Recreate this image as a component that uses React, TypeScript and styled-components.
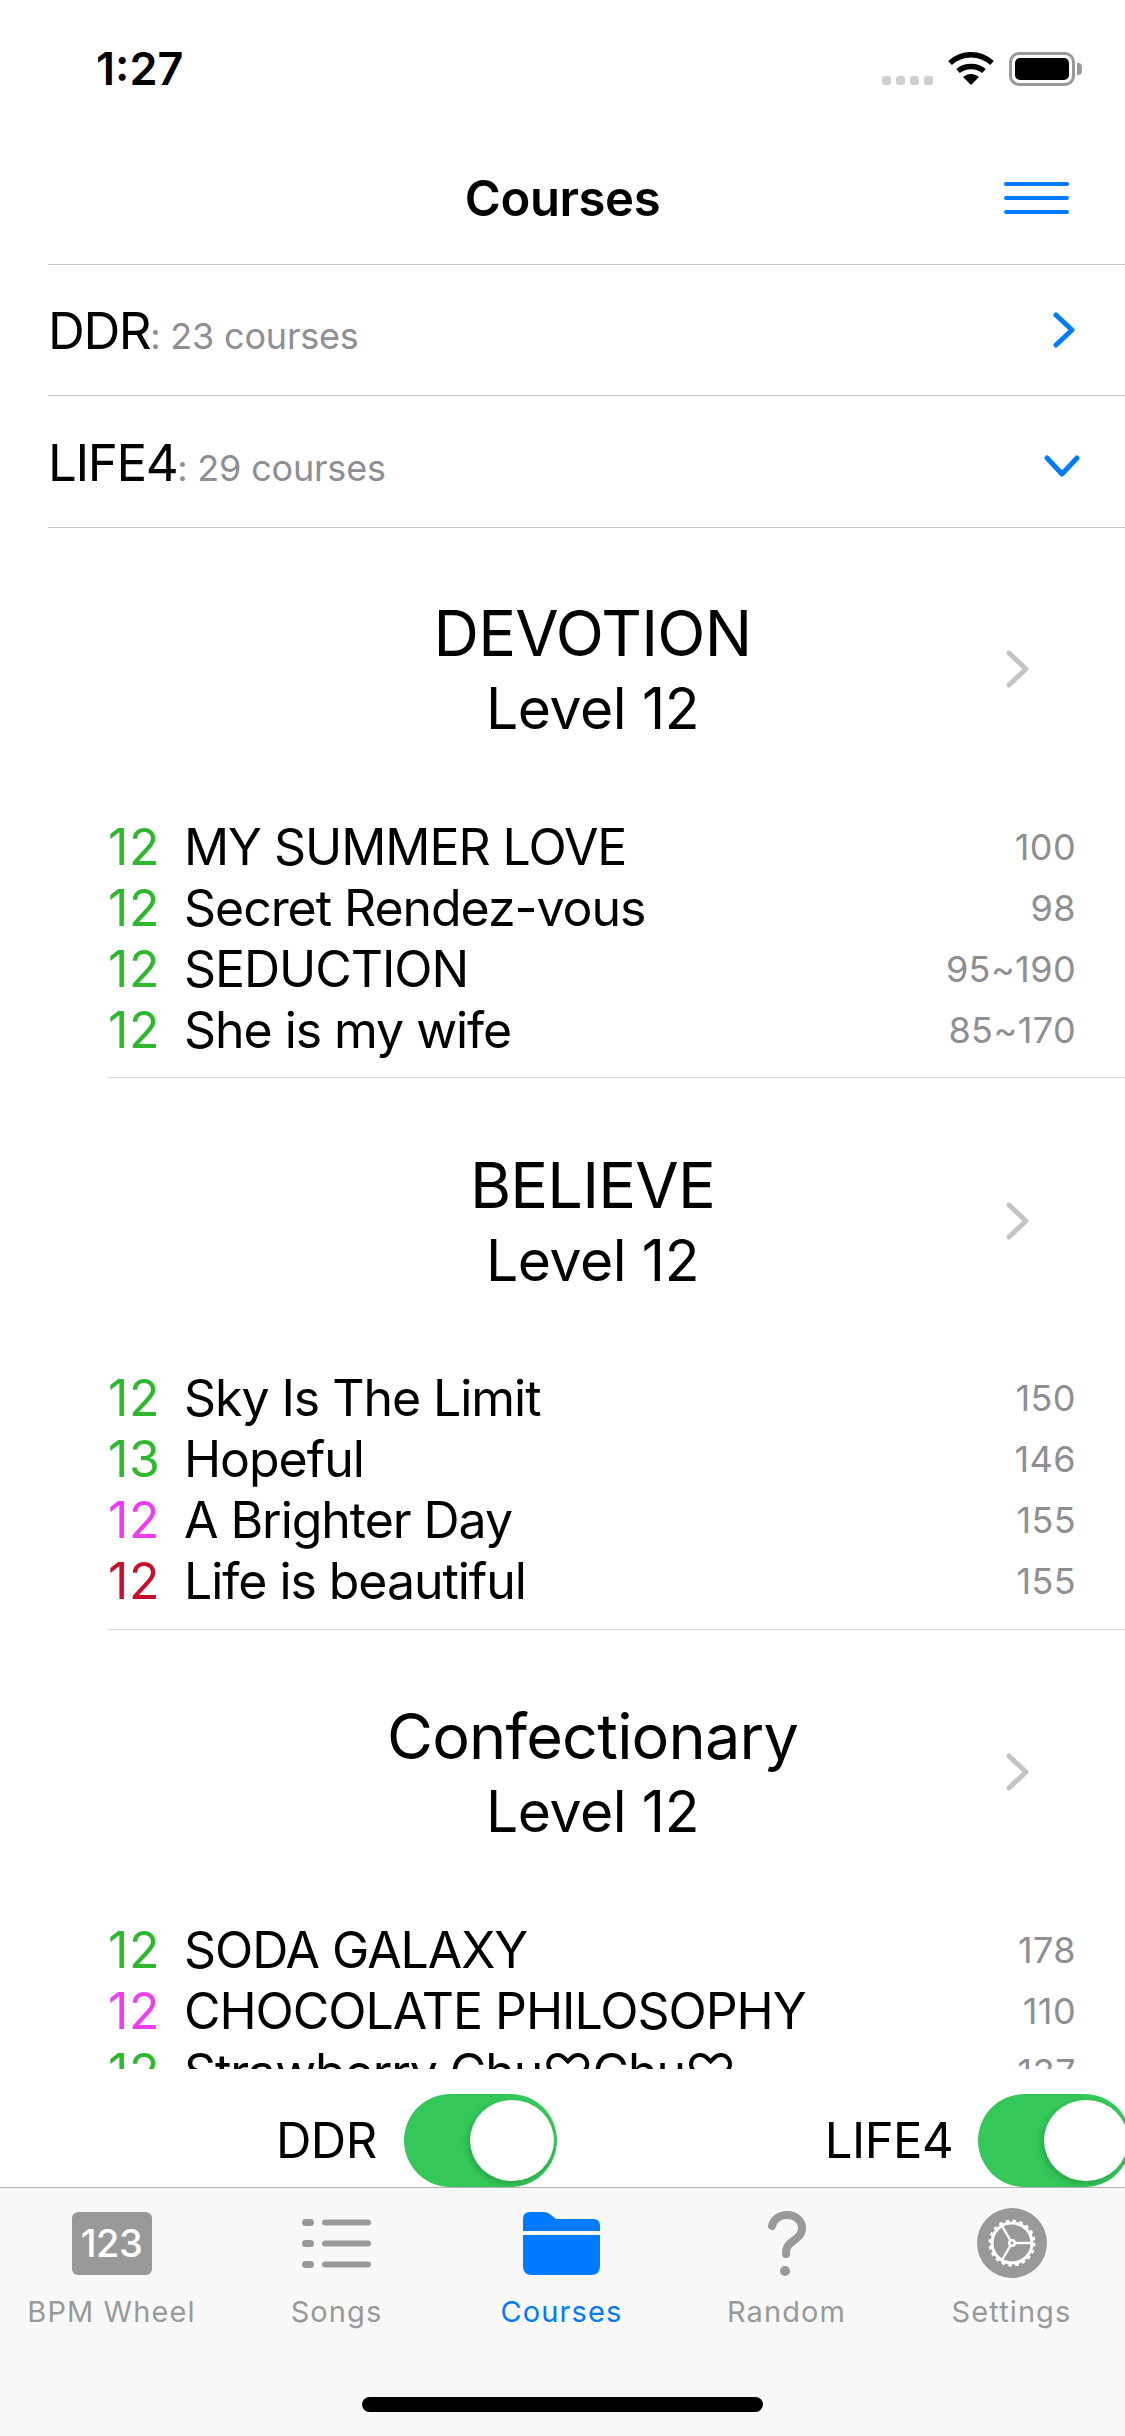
import styled, { createGlobalStyle } from "styled-components";

const GlobalStyle = createGlobalStyle`
  html, body {
    margin: 0;
    padding: 0;
    background: #fff;
  }
  * {
    box-sizing: border-box;
  }
`;

const Screen = styled.div`
  width: 1125px;
  height: 2436px;
  display: flex;
  flex-direction: column;
  overflow: hidden;
  background: #fff;
  font-family: Inter, "Liberation Sans", "DejaVu Sans", sans-serif;
  color: #000;
`;

const StatusBar = styled.div`
  height: 132px;
  flex: none;
  display: flex;
  justify-content: space-between;
  padding: 47px 50px 0 96px;
`;

const Clock = styled.div`
  font-size: 45px;
  line-height: 43px;
  font-weight: 600;
  letter-spacing: 0;
`;

const StatusIcons = styled.div`
  display: flex;
  align-items: flex-start;
  padding-top: 5px;
`;

const SignalDots = styled.div`
  display: flex;
  gap: 5px;
  margin: 24px 15px 0 0;
`;

const SignalDot = styled.span`
  width: 9px;
  height: 9px;
  border-radius: 3px;
  background: #cfcfcf;
`;

const Battery = styled.div`
  width: 66px;
  height: 34px;
  margin-left: 15px;
  border: 3px solid #999;
  border-radius: 10px;
  padding: 3px;
  position: relative;
  &::after {
    content: "";
    position: absolute;
    right: -10px;
    top: 8px;
    width: 5px;
    height: 12px;
    border-radius: 0 4px 4px 0;
    background: #999;
  }
`;

const BatteryFill = styled.div`
  height: 100%;
  border-radius: 5px;
  background: #000;
`;

const NavBar = styled.div`
  height: 132px;
  flex: none;
  display: grid;
  grid-template-columns: 1fr auto 1fr;
  align-items: center;
  padding: 0 56px;
`;

const NavTitle = styled.div`
  grid-column: 2;
  font-size: 49px;
  font-weight: 600;
  letter-spacing: -0.4px;
`;

const MenuButton = styled.div`
  justify-self: end;
  width: 65px;
  display: flex;
  flex-direction: column;
  gap: 10px;
`;

const MenuBar = styled.span`
  height: 4px;
  border-radius: 2px;
  background: #007aff;
`;

const GroupRow = styled.div<{ $height: number; $paddingTop?: number }>`
  height: ${({ $height }) => $height}px;
  padding-top: ${({ $paddingTop = 0 }) => $paddingTop}px;
  flex: none;
  margin-left: 48px;
  border-top: 1.5px solid #c8c8c8;
  display: flex;
  align-items: center;
  justify-content: space-between;
`;

const GroupText = styled.div`
  font-size: 51px;
  letter-spacing: -1.4px;
`;

const GroupCount = styled.span`
  font-size: 36px;
  letter-spacing: -0.2px;
  color: #8e8e93;
`;

const BlueChevron = styled.svg<{ $right: number; $top?: number }>`
  margin-right: ${({ $right }) => $right}px;
  margin-top: ${({ $top = 0 }) => $top}px;
  fill: none;
  stroke: #007aff;
  stroke-width: 5;
  stroke-linecap: round;
  stroke-linejoin: round;
`;

const Courses = styled.div`
  flex: 1;
  min-height: 0;
  overflow: hidden;
  border-top: 1.5px solid #c8c8c8;
  margin-left: 48px;
`;

const Course = styled.section`
  margin-left: 60px;
  padding-bottom: 17px;
  border-bottom: 1px solid #d6d6d6;
  & + & {
    margin-top: 1.5px;
  }
`;

const CourseHead = styled.div`
  height: 288px;
  padding: 67px 48px 0 0;
  display: grid;
  grid-template-columns: 1fr auto 1fr;
  align-items: start;
`;

const CourseTitle = styled.div`
  grid-column: 2;
  text-align: center;
`;

const CourseName = styled.div`
  font-size: 63px;
  line-height: 76px;
  letter-spacing: -0.8px;
`;

const CourseLevel = styled.div`
  font-size: 57px;
  line-height: 76px;
  letter-spacing: -0.4px;
`;

const CourseChevron = styled.svg`
  grid-column: 3;
  justify-self: end;
  margin: 54px 46px 0 0;
  width: 26px;
  height: 40px;
  fill: none;
  stroke: #c4c4c7;
  stroke-width: 5;
  stroke-linecap: round;
  stroke-linejoin: round;
`;

const Song = styled.div`
  height: 61px;
  display: flex;
  align-items: center;
  padding-right: 49px;
  font-size: 50px;
  letter-spacing: -1.05px;
`;

const SongLevel = styled.span<{ $color: string }>`
  width: 76px;
  flex: none;
  letter-spacing: 0.7px;
  color: ${({ $color }) => $color};
`;

const SongName = styled.span`
  flex: 1;
  white-space: nowrap;
`;

const SongBpm = styled.span`
  font-size: 36px;
  letter-spacing: 0.4px;
  color: #8e8e93;
`;

const Filters = styled.div`
  height: 118px;
  flex: none;
  display: flex;
  align-items: flex-end;
  background: #fff;
  padding-left: 276px;
`;

const FilterLabel = styled.div`
  height: 93px;
  display: flex;
  align-items: center;
  font-size: 49px;
  letter-spacing: -0.5px;
`;

const Switch = styled.div<{ $before: number; $after: number }>`
  width: 153px;
  height: 93px;
  flex: none;
  margin: 0 ${({ $after }) => $after}px 0 ${({ $before }) => $before}px;
  padding: 6px 3px 6px 0;
  border-radius: 47px;
  background: #34c759;
  display: flex;
  justify-content: flex-end;
`;

const SwitchThumb = styled.span`
  width: 84px;
  height: 81px;
  border-radius: 50%;
  background: #fff;
  box-shadow: -2px 3px 6px rgba(0, 0, 0, 0.18);
`;

const TabBar = styled.div`
  height: 249px;
  flex: none;
  background: #f8f8f8;
  border-top: 1.5px solid #b2b2b2;
  display: grid;
  grid-template-columns: repeat(5, 225px);
  position: relative;
`;

const Tab = styled.div<{ $active?: boolean }>`
  display: flex;
  flex-direction: column;
  align-items: center;
  padding-right: 2px;
  color: ${({ $active }) => ($active ? "#007aff" : "#999")};
`;

const TabIcon = styled.div`
  height: 106px;
  display: flex;
  align-items: center;
  justify-content: center;
  padding-top: 4px;
`;

const TabLabel = styled.div`
  font-size: 29px;
  line-height: 36px;
  letter-spacing: 1.1px;
`;

const NumberBadge = styled.div`
  width: 80px;
  height: 63px;
  border-radius: 6px;
  background: #999;
  color: #fff;
  font-size: 38px;
  font-weight: 500;
  letter-spacing: -0.5px;
  display: flex;
  align-items: center;
  justify-content: center;
`;

const HomeIndicator = styled.div`
  position: absolute;
  left: 362px;
  bottom: 24px;
  width: 401px;
  height: 15px;
  border-radius: 8px;
  background: #000;
`;

const GREEN = "#2eb82e";
const MAGENTA = "#f03cf0";
const RED = "#c8102e";

const courses = [
  {
    name: "DEVOTION",
    songs: [
      ["12", GREEN, "MY SUMMER LOVE", "100"],
      ["12", GREEN, "Secret Rendez-vous", "98"],
      ["12", GREEN, "SEDUCTION", "95~190"],
      ["12", GREEN, "She is my wife", "85~170"],
    ],
  },
  {
    name: "BELIEVE",
    songs: [
      ["12", GREEN, "Sky Is The Limit", "150"],
      ["13", GREEN, "Hopeful", "146"],
      ["12", MAGENTA, "A Brighter Day", "155"],
      ["12", RED, "Life is beautiful", "155"],
    ],
  },
  {
    name: "Confectionary",
    songs: [
      ["12", GREEN, "SODA GALAXY", "178"],
      ["12", MAGENTA, "CHOCOLATE PHILOSOPHY", "110"],
      ["12", GREEN, "Strawberry Chu♡Chu♡", "137"],
    ],
  },
];

function Wifi() {
  return (
    <svg width="46" height="33" viewBox="0 0 46 33" fill="none" stroke="#000" strokeWidth="5.5">
      <path d="M2 11 C14 0 32 0 44 11" />
      <path d="M10 19 C17 13 29 13 36 19" />
      <path d="M15 25 L23 33 L31 25 C26 21 20 21 15 25 Z" fill="#000" stroke="none" />
    </svg>
  );
}

function ListIcon() {
  return (
    <svg width="69" height="49" viewBox="0 0 69 49" fill="#999">
      <rect x="0" y="0" width="12" height="7" rx="3.5" />
      <rect x="20" y="0.5" width="49" height="6" rx="3" />
      <rect x="0" y="21" width="12" height="7" rx="3.5" />
      <rect x="20" y="21.5" width="49" height="6" rx="3" />
      <rect x="0" y="42" width="12" height="7" rx="3.5" />
      <rect x="20" y="42.5" width="49" height="6" rx="3" />
    </svg>
  );
}

function FolderIcon() {
  return (
    <svg width="77" height="63" viewBox="0 0 77 63" fill="#007aff">
      <path d="M0 19 V7 Q0 0 7 0 H20 Q25 0 28 3 L33 7 H70 Q77 7 77 14 V19 Z" />
      <path d="M0 23 H77 V54 Q77 63 68 63 H9 Q0 63 0 54 Z" />
    </svg>
  );
}

function QuestionIcon() {
  return (
    <svg width="38" height="65" viewBox="0 0 38 65" fill="none" stroke="#999" strokeWidth="8" strokeLinecap="round">
      <path d="M4 15 C6 8 12 4 19 4 C28 4 34 10 34 17 C34 24 29 27 24 31 C20 34 18 36 18 43" />
      <circle cx="17" cy="60" r="5" fill="#999" stroke="none" />
    </svg>
  );
}

function GearIcon() {
  return (
    <svg width="70" height="70" viewBox="0 0 70 70">
      <circle cx="35" cy="35" r="35" fill="#999" />
      <circle cx="35" cy="35" r="20" fill="none" stroke="#fff" strokeWidth="3" />
      <circle cx="35" cy="35" r="21.5" fill="none" stroke="#fff" strokeWidth="4" strokeDasharray="3.4 3.35" />
      <g stroke="#fff" strokeWidth="2.4">
        <path d="M35 35 H54" />
        <path d="M35 35 L25 18" />
        <path d="M35 35 L25 52" />
      </g>
      <circle cx="35" cy="35" r="4" fill="#fff" />
      <circle cx="35" cy="35" r="1.5" fill="#999" />
    </svg>
  );
}

export default function App() {
  return (
    <>
      <GlobalStyle />
      <Screen>
        <StatusBar>
          <Clock>1:27</Clock>
          <StatusIcons>
            <SignalDots>
              <SignalDot />
              <SignalDot />
              <SignalDot />
              <SignalDot />
            </SignalDots>
            <Wifi />
            <Battery>
              <BatteryFill />
            </Battery>
          </StatusIcons>
        </StatusBar>
        <NavBar>
          <NavTitle>Courses</NavTitle>
          <MenuButton>
            <MenuBar />
            <MenuBar />
            <MenuBar />
          </MenuButton>
        </NavBar>
        <GroupRow $height={131}>
          <GroupText>
            DDR<GroupCount>: 23 courses</GroupCount>
          </GroupText>
          <BlueChevron $right={50} width="23" height="36" viewBox="0 0 23 36">
            <path d="M4 3 L20 18 L4 33" />
          </BlueChevron>
        </GroupRow>
        <GroupRow $height={132} $paddingTop={2}>
          <GroupText>
            LIFE4<GroupCount>: 29 courses</GroupCount>
          </GroupText>
          <BlueChevron $right={45} $top={7} width="36" height="22" viewBox="0 0 36 22">
            <path d="M3 3 L18 19 L33 3" />
          </BlueChevron>
        </GroupRow>
        <Courses>
          {courses.map((course) => (
            <Course key={course.name}>
              <CourseHead>
                <CourseTitle>
                  <CourseName>{course.name}</CourseName>
                  <CourseLevel>Level 12</CourseLevel>
                </CourseTitle>
                <CourseChevron viewBox="0 0 26 40">
                  <path d="M4 4 L21 20 L4 36" />
                </CourseChevron>
              </CourseHead>
              {course.songs.map(([level, color, name, bpm]) => (
                <Song key={name}>
                  <SongLevel $color={color}>{level}</SongLevel>
                  <SongName>{name}</SongName>
                  <SongBpm>{bpm}</SongBpm>
                </Song>
              ))}
            </Course>
          ))}
        </Courses>
        <Filters>
          <FilterLabel>DDR</FilterLabel>
          <Switch $before={27} $after={268}>
            <SwitchThumb />
          </Switch>
          <FilterLabel>LIFE4</FilterLabel>
          <Switch $before={25} $after={0}>
            <SwitchThumb />
          </Switch>
        </Filters>
        <TabBar>
          <Tab>
            <TabIcon>
              <NumberBadge>123</NumberBadge>
            </TabIcon>
            <TabLabel>BPM Wheel</TabLabel>
          </Tab>
          <Tab>
            <TabIcon>
              <ListIcon />
            </TabIcon>
            <TabLabel>Songs</TabLabel>
          </Tab>
          <Tab $active>
            <TabIcon>
              <FolderIcon />
            </TabIcon>
            <TabLabel>Courses</TabLabel>
          </Tab>
          <Tab>
            <TabIcon>
              <QuestionIcon />
            </TabIcon>
            <TabLabel>Random</TabLabel>
          </Tab>
          <Tab>
            <TabIcon>
              <GearIcon />
            </TabIcon>
            <TabLabel>Settings</TabLabel>
          </Tab>
          <HomeIndicator />
        </TabBar>
      </Screen>
    </>
  );
}
